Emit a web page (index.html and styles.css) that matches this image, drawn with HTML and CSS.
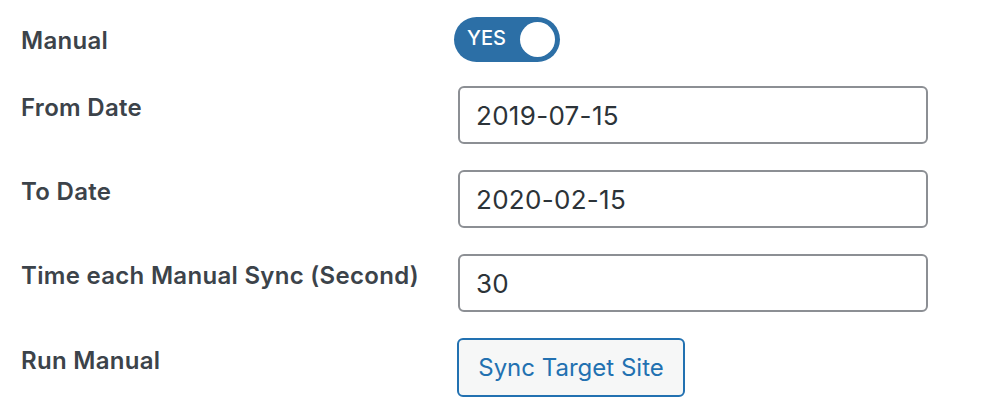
FILE: index.html
```html
<!DOCTYPE html>
<html lang="en">
<head>
<meta charset="utf-8">
<title>Manual Sync Settings</title>
<link rel="stylesheet" href="styles.css">
</head>
<body>
<form class="form-table">
  <div class="row row-toggle">
    <div class="label">Manual</div>
    <div class="field">
      <span class="toggle"><span class="toggle-text">YES</span><span class="knob"></span></span>
    </div>
  </div>
  <div class="row">
    <div class="label">From Date</div>
    <div class="field"><input class="text-input" type="text" value="2019-07-15"></div>
  </div>
  <div class="row">
    <div class="label">To Date</div>
    <div class="field"><input class="text-input" type="text" value="2020-02-15"></div>
  </div>
  <div class="row">
    <div class="label">Time each Manual Sync (Second)</div>
    <div class="field"><input class="text-input" type="text" value="30"></div>
  </div>
  <div class="row row-button">
    <div class="label">Run Manual</div>
    <div class="field"><button type="button" class="button">Sync Target Site</button></div>
  </div>
</form>
</body>
</html>
```

FILE: styles.css
```css
html, body {
  margin: 0;
  padding: 0;
  background: #ffffff;
}

body {
  font-family: Inter, "Liberation Sans", Arial, sans-serif;
  color: #3c434a;
}

.form-table {
  display: flex;
  flex-direction: column;
  gap: 26px;
  padding: 17px 0 0 21px;
}

.row {
  display: grid;
  grid-template-columns: 437px 470px;
  align-items: start;
}

.row-toggle {
  margin-bottom: -2px;
}

.label {
  font-size: 24px;
  font-weight: 600;
  letter-spacing: 0.3px;
  line-height: 28px;
  padding-top: 8px;
  color: #3c434a;
  white-space: nowrap;
}

.row-toggle .label {
  padding-top: 10px;
}

.row-button .label {
  padding-top: 9px;
}

.field {
  display: flex;
}

.toggle {
  display: flex;
  align-items: center;
  justify-content: space-between;
  width: 106px;
  height: 45px;
  box-sizing: border-box;
  padding: 0 5px 0 13px;
  margin-left: -4px;
  border-radius: 23px;
  background: #2c6fa6;
}

.toggle-text {
  color: #ffffff;
  font-size: 20px;
  font-weight: 500;
  line-height: 1;
  margin-top: -3px;
}

.knob {
  width: 35px;
  height: 35px;
  border-radius: 50%;
  background: #ffffff;
}

.text-input {
  width: 470px;
  height: 58px;
  box-sizing: border-box;
  margin: 0;
  padding: 0 16px;
  font-family: Inter, "Liberation Sans", Arial, sans-serif;
  font-size: 26px;
  letter-spacing: 0.3px;
  color: #2c3338;
  background: #ffffff;
  border: 2px solid #8c8f94;
  border-radius: 6px;
  outline: none;
}

.button {
  width: 228px;
  height: 59px;
  box-sizing: border-box;
  margin: 0 0 0 -1px;
  padding: 0;
  font-family: Inter, "Liberation Sans", Arial, sans-serif;
  font-size: 24px;
  color: #2271b1;
  background: #f6f7f7;
  border: 2px solid #2271b1;
  border-radius: 6px;
}
```
